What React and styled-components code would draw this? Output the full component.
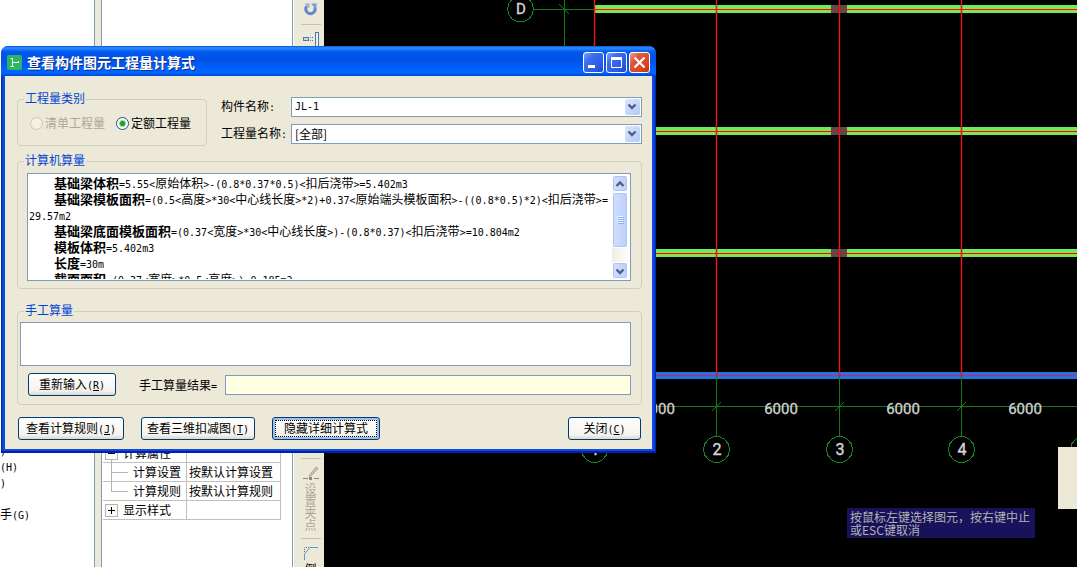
import React from "react";
import styled, { createGlobalStyle, css } from "styled-components";

const cjk = '"Noto Sans CJK SC", "Liberation Sans", sans-serif';
const face = "#ece9d8";
const edge = "#7f9db9";

const GlobalStyle = createGlobalStyle`
  *, *::before, *::after { box-sizing: border-box; }
  body { margin: 0; background: #000; color: #000; font: 12px/16px ${cjk}; }
  button, input, select, textarea { font: inherit; color: inherit; margin: 0; }
`;

/* ---------- shared text ---------- */

const Latin = styled.span`
  font-family: "DejaVu Sans Mono", monospace;
  font-size: 10px;
  line-height: 1;
`;

function Mixed({ children }) {
  return children
    .split(/([\x20-\x7e]+)/)
    .map((part, i) => (i % 2 ? <Latin key={i}>{part}</Latin> : part));
}

/* ---------- workspace ---------- */

const Workspace = styled.div`
  position: relative;
  display: grid;
  grid-template-columns: 95px 7px 191px 31px minmax(0, 1fr);
  height: 100vh;
  min-height: 560px;
  overflow: hidden;
`;

const MenuPanel = styled.nav`
  display: flex;
  flex-direction: column;
  justify-content: flex-end;
  padding-bottom: 45px;
  background: #fff;
  border-right: 1px solid ${edge};
  overflow: hidden;
`;

const MenuEntry = styled.div`
  height: 16px;
  white-space: pre;
`;

const Splitter = styled.div`
  background: ${face};
  border-right: 1px solid ${edge};
`;

const PropertyPanel = styled.section`
  display: flex;
  flex-direction: column;
  justify-content: flex-end;
  padding: 0 11px 47px 1px;
  background: #fff;
  border-right: 1px solid ${edge};
`;

const PropertyTable = styled.table`
  width: 100%;
  border-collapse: separate;
  border-spacing: 0;
  table-layout: fixed;
`;

const NameCell = styled.th`
  position: relative;
  width: 84px;
  height: 19px;
  padding: 0 0 0 ${(p) => (p.$child ? 30 : 20)}px;
  border-right: 1px solid #c0c0c0;
  border-bottom: 1px solid #c0c0c0;
  font-weight: normal;
  text-align: left;
  white-space: nowrap;
  ${(p) =>
    p.$child &&
    css`
      &::before {
        content: "";
        position: absolute;
        left: 8px;
        top: -4px;
        width: 17px;
        height: 14px;
        border-left: 1px solid #b4b4b4;
        border-bottom: 1px solid #b4b4b4;
      }
      &:not(.last)::after {
        content: "";
        position: absolute;
        left: 8px;
        top: 9px;
        height: 10px;
        border-left: 1px solid #b4b4b4;
      }
    `}
`;

const ValueCell = styled.td`
  height: 19px;
  padding: 0 0 0 2px;
  border-right: 1px solid #c0c0c0;
  border-bottom: 1px solid #c0c0c0;
  white-space: nowrap;
`;

const Expander = styled.button`
  position: absolute;
  left: 2px;
  top: 3px;
  width: 13px;
  height: 13px;
  padding: 0;
  border: 1px solid #b4b4b4;
  background: #fbfaf6;
  display: grid;
  place-items: center;
`;

const Toolbar = styled.aside`
  display: flex;
  flex-direction: column;
  justify-content: space-between;
  padding: 2px 3px 0 6px;
  background: ${face};
  border-left: 1px solid #fff;
  overflow: hidden;
`;

const ToolGroup = styled.div`
  display: flex;
  flex-direction: column;
  align-items: center;
  gap: 7px;
`;

const ToolButton = styled.button`
  display: flex;
  flex-direction: column;
  align-items: center;
  width: 18px;
  padding: 0;
  border: 0;
  background: none;
  color: #000;
  line-height: 12px;
  &:disabled { color: #aca899; }
`;

const ToolRule = styled.hr`
  width: 20px;
  margin: 0;
  border: 0;
  border-top: 1px solid #c5c2b2;
`;

const ToolLabel = styled.span`
  width: 12px;
  margin-top: 2px;
`;

const LastTool = styled.div`
  height: 21px;
`;

/* ---------- drawing ---------- */

const Drawing = styled.main`
  position: relative;
  background: #000;
  overflow: hidden;
`;

const Plan = styled.svg`
  display: block;
  width: 100%;
  height: 100%;
  text {
    font-family: Roboto, "Liberation Sans", sans-serif;
    fill: #d4d4d4;
    text-anchor: middle;
  }
`;

const Hint = styled.div`
  position: absolute;
  left: 523px;
  top: 508px;
  width: 188px;
  padding: 2px 3px;
  background: #18125a;
  color: #b2b2b2;
  line-height: 13px;
`;

const SidePalette = styled.div`
  position: absolute;
  right: 0;
  top: 447px;
  width: 19px;
  height: 62px;
  background: ${face};
`;

/* ---------- dialog window ---------- */

const Dialog = styled.form`
  position: absolute;
  left: 1px;
  top: 46px;
  width: 655px;
  max-width: calc(100vw - 2px);
  background: linear-gradient(90deg, #0022b0 0, #0b4be0 2px, #0b4be0 calc(100% - 2px), #001aa0 100%);
  border-radius: 7px 7px 0 0;
  border-bottom: 2px solid #0020a8;
  padding: 0 4px 2px;
`;

const TitleBar = styled.header`
  display: flex;
  align-items: center;
  height: 30px;
  margin: 0 -4px;
  padding: 2px 6px 0;
  border-radius: 7px 7px 0 0;
  background: linear-gradient(180deg, #0a50d0 0, #2c8cff 6%, #0058ee 20%, #0050e6 45%, #0064ff 80%, #0064ff 90%, #0044d0 100%);
`;

const Title = styled.h1`
  flex: 1;
  margin: 0 0 0 5px;
  color: #fff;
  font-size: 14px;
  font-weight: 700;
  line-height: 20px;
  text-shadow: 1px 1px 0 #0a2a86;
`;

const CaptionButtons = styled.div`
  display: flex;
  gap: 2px;
`;

const CaptionButton = styled.button`
  width: 21px;
  height: 21px;
  padding: 0;
  border: 1px solid #fff;
  border-radius: 3px;
  background: ${(p) =>
    p.$close
      ? "linear-gradient(135deg, #f0a088 0, #e2583a 30%, #d8431c 75%, #b83010 100%)"
      : "linear-gradient(135deg, #7ca4f8 0, #3b6cf0 30%, #2a5ae4 75%, #1c48c8 100%)"};
  svg { display: block; }
`;

const DialogBody = styled.div`
  padding: 16px 10px 9px 12px;
  background: ${face};
`;

const TopRow = styled.div`
  display: flex;
  gap: 14px;
`;

const Group = styled.fieldset`
  min-width: 0;
  margin: ${(p) => p.$gap || 0}px 0 0;
  padding: 0;
  border: 1px solid #d0d0bf;
  border-radius: 4px;
`;

const Legend = styled.legend`
  height: 14px;
  margin-left: 6px;
  padding: 0 1px;
  color: #0046d5;
  line-height: 12px;
`;

const Choices = styled.div`
  display: flex;
  gap: 11px;
  width: 188px;
  padding: 9px 12px 14px;
`;

const Choice = styled.label`
  display: flex;
  align-items: center;
  gap: 2px;
  height: 16px;
  white-space: nowrap;
  color: ${(p) => (p.$off ? "#aca899" : "#000")};
`;

const Radio = styled.input`
  appearance: none;
  width: 13px;
  height: 13px;
  border: 1px solid #1d5281;
  border-radius: 50%;
  background: #fff;
  &:checked { background: radial-gradient(circle, #21a121 0 2px, #8fd48f 3px, #fff 4px); }
  &:disabled { border-color: #cac8bb; background: #f3f1e6; }
`;

const Fields = styled.div`
  flex: 1;
  display: grid;
  grid-template-columns: 70px minmax(0, 1fr);
  grid-auto-rows: 20px;
  row-gap: 7px;
  padding-top: 5px;
`;

const FieldLabel = styled.label`
  line-height: 18px;
  white-space: nowrap;
`;

const Combo = styled.div`
  position: relative;
  display: flex;
`;

const Select = styled.select`
  appearance: none;
  width: 100%;
  height: 20px;
  padding: 0 20px 0 3px;
  border: 1px solid ${edge};
  border-radius: 0;
  background: #fff;
  line-height: 18px;
  ${(p) => p.$latin && css`font-family: "DejaVu Sans Mono", monospace; font-size: 10px;`}
`;

const ComboArrow = styled.span`
  position: absolute;
  right: 2px;
  top: 2px;
  width: 15px;
  height: 16px;
  border-radius: 2px;
  background: linear-gradient(135deg, #dce6fe, #b4c8f6);
  pointer-events: none;
`;

const ResultArea = styled.div`
  padding: 5px 10px 7px 9px;
`;

const ResultBox = styled.div`
  display: flex;
  height: 108px;
  padding: 1px;
  border: 1px solid ${edge};
  background: #fff;
`;

const Formulas = styled.div`
  flex: 1;
  min-width: 0;
  overflow: hidden;
`;

const Formula = styled.p`
  margin: 0;
  text-indent: 25px;
  line-height: 16px;
  white-space: nowrap;
  strong { font-size: 13px; font-weight: 700; line-height: 1; }
`;

const ScrollBar = styled.div`
  display: flex;
  flex-direction: column;
  width: 17px;
  padding-right: 1px;
  background: linear-gradient(90deg, #f0eee6, #fefefb);
`;

const ScrollPart = styled.button`
  display: grid;
  place-items: center;
  width: 16px;
  height: ${(p) => p.$size}px;
  padding: 0;
  border: 1px solid #fff;
  border-radius: 3px;
  box-shadow: inset 0 0 0 1px #b0c4f4;
  background: linear-gradient(90deg, #d2dffe, #bccffb);
`;

const ScrollGap = styled.div`
  flex: 1;
`;

const ManualArea = styled.div`
  padding: 4px 10px 8px 2px;
`;

const ManualText = styled.textarea`
  display: block;
  width: 100%;
  height: 44px;
  padding: 2px;
  border: 1px solid ${edge};
  background: #fff;
  resize: none;
`;

const ManualRow = styled.div`
  display: flex;
  align-items: center;
  margin-top: 7px;
  padding-left: 8px;
`;

const ResultLabel = styled.label`
  margin: 0 8px 0 23px;
  white-space: nowrap;
`;

const ResultInput = styled.input`
  flex: 1;
  min-width: 0;
  height: 20px;
  border: 1px solid ${edge};
  background: #ffffe1;
`;

const PushButton = styled.button`
  width: ${(p) => p.$width}px;
  height: 23px;
  padding: 0 0 2px;
  border: 1px solid #003c74;
  border-radius: 3px;
  background: linear-gradient(180deg, #fff, #f4f3ee 80%, #dcd8cc);
  line-height: 16px;
  white-space: nowrap;
  ${(p) =>
    p.$focused &&
    css`
      box-shadow: inset 0 0 0 2px #9ebcf0;
      outline: 1px dotted #000;
      outline-offset: -4px;
    `}
`;

const Footer = styled.footer`
  display: flex;
  gap: 17px;
  margin-top: 12px;
  padding: 0 1px;
`;

const FooterGap = styled.div`
  flex: 1;
`;

function Chevron({ up }) {
  return (
    <svg width="14" height="14" viewBox="0 0 14 14" aria-hidden="true">
      <path d={up ? "M3.5 9 L7 5.5 L10.5 9" : "M3.5 5.5 L7 9 L10.5 5.5"} fill="none" stroke="#4d6185" strokeWidth="2.4" />
    </svg>
  );
}

function ComboBox({ id, value, latin }) {
  return (
    <Combo>
      <Select id={id} defaultValue={value} $latin={latin}>
        <option>{value}</option>
      </Select>
      <ComboArrow><Chevron /></ComboArrow>
    </Combo>
  );
}

function Key({ children }) {
  return <Latin>(<u>{children}</u>)</Latin>;
}

const formulas = [
  ["基础梁体积", "=5.55<原始体积>-(0.8*0.37*0.5)<扣后浇带>=5.402m3"],
  ["基础梁模板面积", "=(0.5<高度>*30<中心线长度>*2)+0.37<原始端头模板面积>-((0.8*0.5)*2)<扣后浇带>=", "29.57m2"],
  ["基础梁底面模板面积", "=(0.37<宽度>*30<中心线长度>)-(0.8*0.37)<扣后浇带>=10.804m2"],
  ["模板体积", "=5.402m3"],
  ["长度", "=30m"],
  ["截面面积", "=(0.37<宽度>*0.5<高度>)=0.185m2"],
];

const axes = [
  { x: 594, name: "1" },
  { x: 716, name: "2" },
  { x: 839, name: "3" },
  { x: 961, name: "4" },
  { x: 1083, name: "" },
];

function FloorPlan() {
  const bubble = (cx, cy) => {
    const points = Array.from({ length: 14 }, (_, i) => {
      const a = (i * Math.PI) / 7;
      return `${(cx + 13 * Math.cos(a)).toFixed(1)},${(cy + 13 * Math.sin(a)).toFixed(1)}`;
    });
    return <polygon points={points.join(" ")} fill="#000" stroke="#1c8420" />;
  };
  return (
    <Plan role="img" aria-label="基础梁平面图">
      <g transform="translate(-324 0)" shapeRendering="crispEdges">
        {[5, 127, 249].map((y) => (
          <g key={y}>
            <rect x="595" y={y} width="3000" height="8" fill="#66f05a" />
            <rect x="595" y={y + 3} width="3000" height="3" fill="#c4c450" />
            <rect x="831" y={y} width="16" height="8" fill="#5c4a4c" />
            <rect x="595" y={y + 4} width="3000" height="1" fill="#c02010" />
          </g>
        ))}
        <rect x="595" y="372" width="3000" height="7" fill="#1c78e0" />
        <rect x="595" y="374" width="3000" height="3" fill="#3c68d0" />
        <rect x="595" y="375" width="3000" height="1" fill="#b03080" />
        <path d="M533 9.5H595M564.5 0V406.5M564 406.5H3600M559 4L569 14" stroke="#147a18" fill="none" />
        {axes.map(({ x }) => (
          <g key={x}>
            <rect x={x - 1} y="0" width="3" height="376" fill="#d00000" opacity="0.25" />
            <rect x={x} y="0" width="1" height="376" fill="#e01c20" />
            <rect x={x} y="376" width="1" height="61" fill="#147a18" />
            <path d={`M${x - 4} 411L${x + 5} 402`} stroke="#147a18" />
            {bubble(x + 0.5, 449.5)}
          </g>
        ))}
        {bubble(520.5, 9)}
      </g>
      <g transform="translate(-324 0)">
        <text x="521" y="14" fontSize="15" stroke="#d4d4d4" strokeWidth="0.4">D</text>
        {axes.map(({ x, name }) => (
          <g key={x}>
            {name && <text x={x + 1} y="455" fontSize="16" stroke="#d4d4d4" strokeWidth="0.4">{name}</text>}
            <text x={x - 58} y="414" fontSize="15" stroke="#d4d4d4" strokeWidth="0.3">6000</text>
          </g>
        ))}
      </g>
    </Plan>
  );
}

export default function App() {
  return (
    <Workspace>
      <GlobalStyle />
      <MenuPanel aria-label="构件列表">
        <MenuEntry><Mixed>)</Mixed></MenuEntry>
        <MenuEntry><Mixed>(H)</Mixed></MenuEntry>
        <MenuEntry><Mixed>)</Mixed></MenuEntry>
        <MenuEntry />
        <MenuEntry><Mixed>手(G)</Mixed></MenuEntry>
      </MenuPanel>
      <Splitter />
      <PropertyPanel>
        <PropertyTable>
          <tbody>
            <tr>
              <NameCell scope="row">
                <Expander type="button" aria-label="折叠">
                  <svg width="9" height="9"><path d="M1 4.5H8" stroke="#000" /></svg>
                </Expander>
                计算属性
              </NameCell>
              <ValueCell />
            </tr>
            <tr>
              <NameCell scope="row" $child>计算设置</NameCell>
              <ValueCell>按默认计算设置</ValueCell>
            </tr>
            <tr>
              <NameCell scope="row" $child className="last">计算规则</NameCell>
              <ValueCell>按默认计算规则</ValueCell>
            </tr>
            <tr>
              <NameCell scope="row">
                <Expander type="button" aria-label="展开">
                  <svg width="9" height="9"><path d="M1 4.5H8M4.5 1V8" stroke="#000" /></svg>
                </Expander>
                显示样式
              </NameCell>
              <ValueCell />
            </tr>
          </tbody>
        </PropertyTable>
      </PropertyPanel>
      <Toolbar>
        <ToolGroup>
          <ToolButton type="button" aria-label="旋转">
            <svg width="16" height="15" viewBox="0 0 16 15">
              <path d="M3.8 4.2A4.6 4.6 0 1 0 11.6 5" fill="none" stroke="#6488d0" strokeWidth="3" />
              <path d="M1.5 1.5H6.5V6Z" fill="#8fabe4" />
              <path d="M8 1.5H14L12.5 7Z" fill="#7c9ce0" />
            </svg>
          </ToolButton>
          <ToolRule />
          <ToolButton type="button" aria-label="对齐">
            <svg width="18" height="18" viewBox="0 0 18 18" fill="none" stroke="#5577a8">
              <rect x="1.5" y="5.5" width="5" height="3" fill="#c8d8f0" />
              <path d="M8 5.5H12M8 8.5H12" strokeDasharray="1 1" />
              <rect x="13.5" y="0.5" width="3" height="17" fill="#e4f0fc" />
            </svg>
          </ToolButton>
        </ToolGroup>
        <ToolGroup>
          <ToolRule />
          <ToolButton type="button" disabled>
            <svg width="18" height="15" viewBox="0 0 18 15">
              <path d="M8 8.5L14 1L16 2.5L10 9L7 10.5Z" fill="#c8c5b8" stroke="#aca899" />
              <path d="M1 12.5H6M12 12.5H17" stroke="#8c897c" />
              <rect x="7" y="11" width="3" height="3" fill="#8c897c" />
            </svg>
            <ToolLabel>设置夹点</ToolLabel>
          </ToolButton>
          <ToolRule />
          <LastTool>
            <ToolButton type="button">
              <svg width="16" height="15" viewBox="0 0 16 15" fill="none">
                <path d="M1.5 14V8L7 1.5H15" stroke="#5b9cc4" />
                <path d="M1.5 6V1.5H6" stroke="#5577a8" strokeDasharray="1 1" />
              </svg>
              <ToolLabel>倒</ToolLabel>
            </ToolButton>
          </LastTool>
        </ToolGroup>
      </Toolbar>
      <Drawing>
        <FloorPlan />
        <Hint>按鼠标左键选择图元，按右键中止或ESC键取消</Hint>
        <SidePalette />
      </Drawing>

      <Dialog role="dialog" aria-labelledby="dialog-title" onSubmit={(e) => e.preventDefault()}>
        <TitleBar>
          <svg width="15" height="15" viewBox="0 0 15 15" aria-hidden="true">
            <rect width="15" height="15" rx="2" fill="#2fb365" />
            <path d="M5.5 3V12M3.5 3.5H6M3.5 11.5H7M5.5 7.5H12M11.5 6V8" stroke="#e6fff0" fill="none" />
          </svg>
          <Title id="dialog-title">查看构件图元工程量计算式</Title>
          <CaptionButtons>
            <CaptionButton type="button" aria-label="最小化">
              <svg width="19" height="19"><rect x="4" y="12" width="7" height="3" fill="#fff" /></svg>
            </CaptionButton>
            <CaptionButton type="button" aria-label="最大化">
              <svg width="19" height="19">
                <path d="M4.5 5V14.5H14.5V5" fill="none" stroke="#fff" />
                <rect x="4" y="4" width="11" height="3" fill="#fff" />
              </svg>
            </CaptionButton>
            <CaptionButton type="button" aria-label="关闭窗口" $close>
              <svg width="19" height="19"><path d="M4.5 4.5L14.5 14.5M14.5 4.5L4.5 14.5" stroke="#fff" strokeWidth="2.2" /></svg>
            </CaptionButton>
          </CaptionButtons>
        </TitleBar>
        <DialogBody>
          <TopRow>
            <Group>
              <Legend>工程量类别</Legend>
              <Choices>
                <Choice $off><Radio type="radio" name="kind" disabled />清单工程量</Choice>
                <Choice><Radio type="radio" name="kind" defaultChecked />定额工程量</Choice>
              </Choices>
            </Group>
            <Fields>
              <FieldLabel htmlFor="part"><Mixed>构件名称:</Mixed></FieldLabel>
              <ComboBox id="part" value="JL-1" latin />
              <FieldLabel htmlFor="quantity"><Mixed>工程量名称:</Mixed></FieldLabel>
              <ComboBox id="quantity" value="[全部]" />
            </Fields>
          </TopRow>
          <Group $gap={8}>
            <Legend>计算机算量</Legend>
            <ResultArea>
              <ResultBox>
                <Formulas>
                  {formulas.map(([name, text, rest]) => (
                    <Formula key={name}>
                      <strong>{name}</strong>
                      <Mixed>{text}</Mixed>
                      {rest && <><br /><Mixed>{rest}</Mixed></>}
                    </Formula>
                  ))}
                </Formulas>
                <ScrollBar>
                  <ScrollPart type="button" aria-label="向上" $size={17}><Chevron up /></ScrollPart>
                  <ScrollPart type="button" aria-label="滚动" $size={56}>
                    <svg width="8" height="8"><path d="M1 .5H7M1 2.5H7M1 4.5H7M1 6.5H7" stroke="#eef4fe" /><path d="M2 1.5H8M2 3.5H8M2 5.5H8M2 7.5H8" stroke="#8cb0f8" /></svg>
                  </ScrollPart>
                  <ScrollGap />
                  <ScrollPart type="button" aria-label="向下" $size={17}><Chevron /></ScrollPart>
                </ScrollBar>
              </ResultBox>
            </ResultArea>
          </Group>
          <Group $gap={15}>
            <Legend>手工算量</Legend>
            <ManualArea>
              <ManualText aria-label="手工算量" />
              <ManualRow>
                <PushButton type="button" $width={88}>重新输入<Key>R</Key></PushButton>
                <ResultLabel htmlFor="manual-result"><Mixed>手工算量结果=</Mixed></ResultLabel>
                <ResultInput id="manual-result" type="text" readOnly />
              </ManualRow>
            </ManualArea>
          </Group>
          <Footer>
            <PushButton type="button" $width={106}>查看计算规则<Key>J</Key></PushButton>
            <PushButton type="button" $width={114}>查看三维扣减图<Key>T</Key></PushButton>
            <PushButton type="button" $width={108} $focused>隐藏详细计算式</PushButton>
            <FooterGap />
            <PushButton type="button" $width={73}>关闭<Key>C</Key></PushButton>
          </Footer>
        </DialogBody>
      </Dialog>
    </Workspace>
  );
}
